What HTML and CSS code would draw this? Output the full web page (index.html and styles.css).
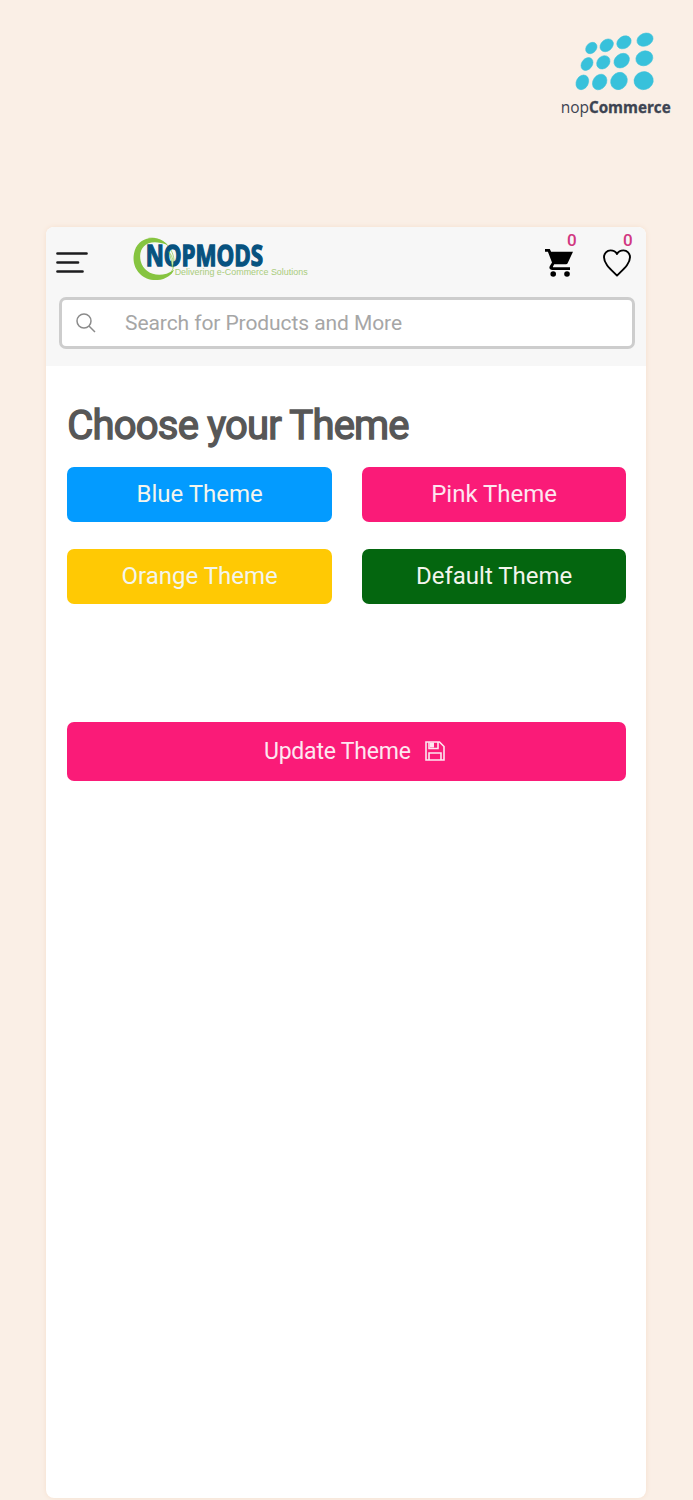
FILE: index.html
```html
<!DOCTYPE html>
<html lang="en">
<head>
<meta charset="utf-8">
<title>Choose your Theme</title>
<link rel="stylesheet" href="styles.css">
</head>
<body>
<div class="brand">
  <svg class="brand-logo" viewBox="0 0 420 330" role="img" aria-label="nopCommerce">
    <g fill="#38c1db" stroke="#38c1db" stroke-width="1.500">
      <ellipse cx="124" cy="84" rx="19" ry="15" transform="rotate(-45 124 84)"/>
      <ellipse cx="170" cy="76" rx="22" ry="17" transform="rotate(-40 170 76)"/>
      <ellipse cx="222" cy="67" rx="23" ry="18" transform="rotate(-32 222 67)"/>
      <ellipse cx="285" cy="59" rx="25" ry="19" transform="rotate(-22 285 59)"/>
      <ellipse cx="111" cy="132" rx="21" ry="16" transform="rotate(-52 111 132)"/>
      <ellipse cx="160" cy="127" rx="22" ry="18" transform="rotate(-45 160 127)"/>
      <ellipse cx="215" cy="122" rx="25" ry="20" transform="rotate(-38 215 122)"/>
      <ellipse cx="283" cy="115" rx="26" ry="22" transform="rotate(-20 283 115)"/>
      <ellipse cx="97" cy="187" rx="23" ry="18" transform="rotate(-62 97 187)"/>
      <ellipse cx="149" cy="186" rx="25" ry="20" transform="rotate(-55 149 186)"/>
      <ellipse cx="207" cy="183" rx="27" ry="24" transform="rotate(-55 207 183)"/>
      <ellipse cx="281" cy="182" rx="29" ry="27" transform="rotate(-15 281 182)"/>
    </g>
    <g class="brand-name">
      <text x="32" y="279" textLength="85" lengthAdjust="spacingAndGlyphs">nop</text>
      <text class="strong" x="117" y="279" textLength="245" lengthAdjust="spacingAndGlyphs">Commerce</text>
    </g>
  </svg>
</div>
<main class="phone">
  <header class="header">
    <div class="toolbar">
      <svg class="menu" viewBox="0 0 32 22"><path d="M1.500 1.500h29M1.500 10.500h20.500M1.500 19.500h25" stroke="#1c1c1e" stroke-width="2.700" stroke-linecap="round"/></svg>
      <svg class="shop-logo" viewBox="0 0 570 165" role="img" aria-label="NOPMODS">
        <path d="M128 45C101 14 45 16 29 62C14 112 50 154 98 150C122 148 142 134 147 119C105 150 56 131 47 93C38 52 68 21 128 45Z" fill="#86c440"/>
        <path d="M70 25C105 19 143 47 147 90C148 104 146 115 139 125" fill="none" stroke="#86c440" stroke-width="2"/>
        <text class="shop-name" x="62" y="107" textLength="352" lengthAdjust="spacingAndGlyphs">NOPMODS</text>
        <path d="M132 65Q150 90 142 112Q140 88 132 65Z" fill="#f7f7f7" stroke="#86c440" stroke-width="2"/>
        <text class="shop-tag" x="149" y="136" textLength="399" lengthAdjust="spacingAndGlyphs">Delivering e-Commerce Solutions</text>
      </svg>
      <div class="action cart">
        <svg viewBox="0 0 28 28"><path d="M0 0h4.800l1.300 2.700H28L22.500 14.500Q22 15.300 21 15.300H9.200L8 17.500q-.3.800.5.800H25V21H7.500C4.500 21 3.700 18.800 5 16.700L7 13.500 2.900 2.700H0Z"/><circle cx="8.200" cy="25" r="2.800"/><circle cx="22" cy="25" r="2.800"/></svg>
        <span class="count">0</span>
      </div>
      <div class="action wish">
        <svg viewBox="0 0 28 28"><path d="M14 26.600C8 20.500 1 15 1 8.300C1 4.300 4 1.400 7.500 1.400C10.600 1.400 12.800 2.800 14 5C15.200 2.800 17.400 1.400 20.500 1.400C24 1.400 27 4.300 27 8.300C27 15 20 20.500 14 26.600Z" fill="none" stroke="#000" stroke-width="1.900" stroke-linejoin="round"/></svg>
        <span class="count">0</span>
      </div>
    </div>
    <div class="search">
      <svg viewBox="0 0 20 20"><circle cx="8" cy="8" r="7" /><path d="M13 13l6 6"/></svg>
      <span>Search for Products and More</span>
    </div>
  </header>
  <section class="content">
    <h1>Choose your Theme</h1>
    <div class="themes">
      <button class="btn blue">Blue Theme</button>
      <button class="btn pink">Pink Theme</button>
      <button class="btn orange">Orange Theme</button>
      <button class="btn green">Default Theme</button>
    </div>
    <button class="btn pink update"><span>Update Theme</span>
      <svg viewBox="0 0 20 20"><path d="M1 1h13.500L19 5.500V19H1Z M4 1v6.500h9V1 M4 19v-7h12v7" /><path class="slot" d="M7 1.500v5"/></svg>
    </button>
  </section>
</main>
</body>
</html>
```

FILE: styles.css
```css
* { box-sizing: border-box; }
body {
  margin: 0;
  height: 1500px;
  overflow: hidden;
  background: #faefe6;
  font-family: Roboto, "Liberation Sans", sans-serif;
}
.brand {
  height: 227px;
  padding: 20px 3px 0 0;
  display: flex;
  justify-content: flex-end;
  align-items: flex-start;
}
.brand-logo { width: 140px; height: 110px; }
.brand-name { font: 48px "Open Sans", sans-serif; fill: #3d4452; }
.brand-name .strong { font-weight: 700; stroke: #3d4452; stroke-width: 1px; }
.phone {
  width: 600.400px;
  height: 1271px;
  margin-left: 46px;
  background: #fff;
  border-radius: 8px;
  overflow: hidden;
  box-shadow: 0 0 5px #f5dfcd;
}
.header { height: 139px; background: #f7f7f7; padding: 0 11px 0 12.500px; }
.toolbar { height: 70px; display: flex; align-items: flex-start; margin-left: -3.500px; }
.menu { width: 32px; height: 22px; margin: 25px 38px 0 1px; fill: none; }
.shop-logo { width: 190px; height: 55px; margin: 3px 230px 0 -1px; flex: none; }
.shop-name { font: 700 84px "Open Sans", sans-serif; fill: #07527f; stroke: #07527f; stroke-width: 4px; }
.shop-tag { font: 26px "Liberation Sans", sans-serif; fill: #a9cc7b; }
.action { position: relative; width: 28px; height: 28px; margin-top: 22px; flex: none; }
.action svg { width: 28px; height: 28px; display: block; }
.wish { margin-left: 30px; }
.count {
  position: absolute;
  left: 22px;
  top: -18px;
  font-size: 17px;
  line-height: 19px;
  font-weight: 500;
  color: #d13881;
}
.wish .count { left: 20px; }
.search {
  height: 52px;
  border: 3px solid #cdcdcd;
  border-radius: 7px;
  background: #fff;
  display: flex;
  align-items: center;
  padding-left: 14.500px;
  gap: 29px;
  font-size: 21px;
  letter-spacing: -0.080px;
  color: #a6a6a6;
}
.search svg { width: 20px; height: 20px; fill: none; stroke: #8b8b8b; stroke-width: 1.500; }
.content { padding: 36px 20px 0 21.300px; }
h1 {
  margin: 0;
  height: 64.500px;
  font-size: 40px;
  line-height: 48px;
  font-weight: 400;
  letter-spacing: -0.800px;
  color: #575757;
  -webkit-text-stroke: 1.400px #575757;
  white-space: nowrap;
}
.themes { display: grid; grid-template-columns: 1fr 1fr; gap: 26.500px 30px; }
.btn {
  height: 55.500px;
  border: 0;
  border-radius: 7px;
  padding: 0;
  font: 24px Roboto, sans-serif;
  color: #f3f5ed;
}
.blue { background: #039bff; }
.pink { background: #fa1b78; color: #fde7f0; }
.orange { background: #ffc904; }
.green { background: #04660f; }
.update {
  width: 100%;
  height: 59.500px;
  margin-top: 117.500px;
  display: flex;
  align-items: center;
  justify-content: center;
  gap: 14px;
  padding-left: 15px;
  font-size: 23px;
  letter-spacing: -0.200px;
}
.update svg { width: 20px; height: 20px; fill: none; stroke: #fde7f0; stroke-width: 1.600; }
.update .slot { stroke-width: 4; }
```
